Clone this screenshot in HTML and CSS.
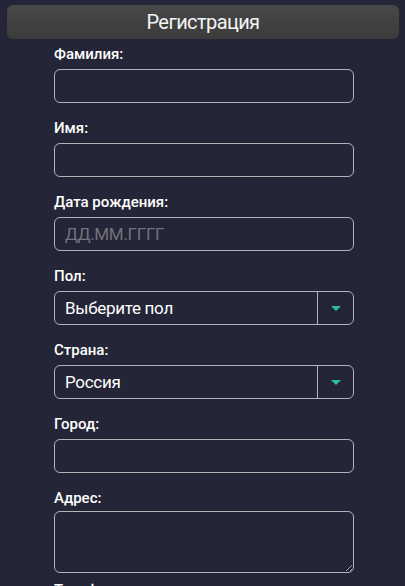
FILE: index.html
```html
<!DOCTYPE html>
<html lang="ru">
<head>
<meta charset="utf-8">
<title>Регистрация</title>
<link rel="stylesheet" href="styles.css">
</head>
<body>
<header class="title-bar">Регистрация</header>
<form class="form">
  <div class="field">
    <label class="label">Фамилия:</label>
    <input class="input" type="text">
  </div>
  <div class="field">
    <label class="label">Имя:</label>
    <input class="input" type="text">
  </div>
  <div class="field">
    <label class="label">Дата рождения:</label>
    <input class="input" type="text" placeholder="ДД.ММ.ГГГГ">
  </div>
  <div class="field">
    <label class="label">Пол:</label>
    <div class="select">
      <span class="select-value">Выберите пол</span>
      <span class="select-btn"><span class="arrow"></span></span>
    </div>
  </div>
  <div class="field">
    <label class="label">Страна:</label>
    <div class="select">
      <span class="select-value">Россия</span>
      <span class="select-btn"><span class="arrow"></span></span>
    </div>
  </div>
  <div class="field">
    <label class="label">Город:</label>
    <input class="input" type="text">
  </div>
  <div class="field field-tight">
    <label class="label">Адрес:</label>
    <textarea class="textarea"></textarea>
  </div>
  <div class="field">
    <label class="label">Телефон:</label>
    <input class="input" type="text">
  </div>
</form>
</body>
</html>
```
FILE: styles.css
```css
html, body {
  margin: 0;
  padding: 0;
  background: #242536;
  height: 100%;
  overflow: hidden;
}
body {
  font-family: Roboto, "Liberation Sans", sans-serif;
  color: #ffffff;
  padding-top: 5px;
}
.title-bar {
  margin: 0 6px 0 7px;
  height: 34px;
  border-radius: 6px;
  background: linear-gradient(#484848, #3b3b3b);
  display: flex;
  align-items: center;
  justify-content: center;
  font-size: 20px;
  letter-spacing: -0.6px;
  color: #f4f4f4;
}
.form {
  margin: 3px 0 0 54px;
  width: 300px;
  display: flex;
  flex-direction: column;
}
.field {
  display: flex;
  flex-direction: column;
  gap: 5px;
  margin-bottom: 13px;
}
.field-tight {
  gap: 3px;
  margin-bottom: 5px;
}
.label {
  font-size: 15px;
  font-weight: 500;
  line-height: 20px;
  padding-top: 2px;
  color: #ffffff;
}
.input, .textarea, .select {
  box-sizing: border-box;
  width: 300px;
  border: 1px solid #b4b4b8;
  border-radius: 6px;
  background: #242536;
  color: #ffffff;
  font-family: Roboto, "Liberation Sans", sans-serif;
  font-size: 17px;
  letter-spacing: -0.3px;
  margin: 0;
}
.input {
  height: 34px;
  padding: 0 10px;
  outline: none;
}
.input::placeholder {
  color: #72727b;
}
.textarea {
  display: block;
  height: 62px;
  padding: 6px 10px;
  resize: vertical;
}
.select {
  height: 34px;
  display: flex;
  align-items: stretch;
}
.select-value {
  flex: 1;
  display: flex;
  align-items: center;
  padding-left: 10px;
}
.select-btn {
  width: 35px;
  border-left: 1px solid #b4b4b8;
  display: flex;
  align-items: center;
  justify-content: center;
}
.arrow {
  width: 0;
  height: 0;
  border-left: 5px solid transparent;
  border-right: 5px solid transparent;
  border-top: 5px solid #2bbd94;
}
```
